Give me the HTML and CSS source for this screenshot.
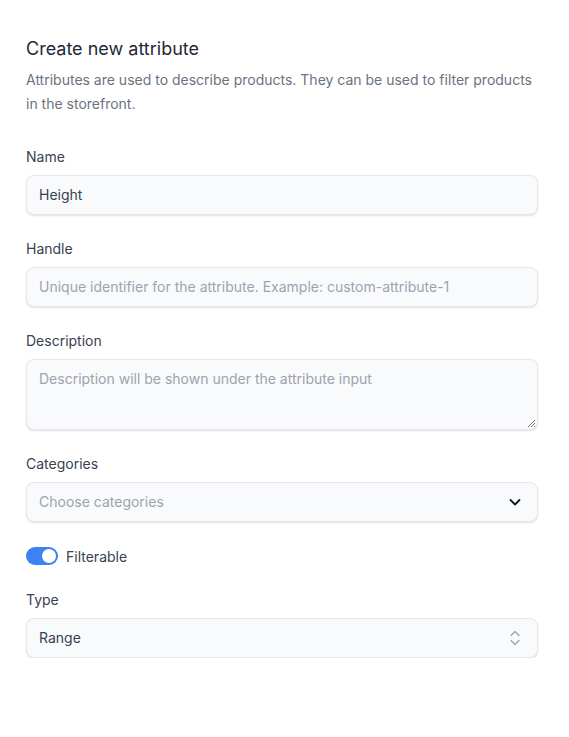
FILE: index.html
```html
<!DOCTYPE html>
<html>
<head>
<meta charset="utf-8">
<link rel="stylesheet" href="styles.css">
</head>
<body>
<div class="page">
  <h1 class="title">Create new attribute</h1>
  <p class="intro">Attributes are used to describe products. They can be used to filter products in the storefront.</p>

  <div class="field first">
    <label class="label">Name</label>
    <div class="input">Height</div>
  </div>

  <div class="field">
    <label class="label">Handle</label>
    <div class="input placeholder">Unique identifier for the attribute. Example: custom-attribute-1</div>
  </div>

  <div class="field">
    <label class="label">Description</label>
    <div class="input textarea placeholder">Description will be shown under the attribute input
      <svg class="grip" width="10" height="10" viewBox="0 0 10 10"><path d="M9 2 L2 9 M9 5 L5 9 M9 8 L8 9" stroke="#6b7280" stroke-width="1" fill="none"/></svg>
    </div>
  </div>

  <div class="field">
    <label class="label">Categories</label>
    <div class="input select placeholder">
      <span>Choose categories</span>
      <svg width="14" height="14" viewBox="0 0 14 14"><path d="M2.5 5 L7 9.5 L11.5 5" stroke="#111827" stroke-width="1.8" fill="none" stroke-linecap="round" stroke-linejoin="round"/></svg>
    </div>
  </div>

  <div class="toggle-row">
    <span class="toggle"><span class="knob"></span></span>
    <span class="toggle-label">Filterable</span>
  </div>

  <div class="field type-field">
    <label class="label">Type</label>
    <div class="input select">
      <span>Range</span>
      <svg width="14" height="18" viewBox="0 0 14 18"><path d="M3 6.5 L7 2.5 L11 6.5 M3 11.5 L7 15.5 L11 11.5" stroke="#9ca3af" stroke-width="1.3" fill="none" stroke-linecap="round" stroke-linejoin="round"/></svg>
    </div>
  </div>
</div>
</body>
</html>
```
FILE: styles.css
```css
* { box-sizing: border-box; }
html, body { margin: 0; padding: 0; background: #ffffff; }
body {
  font-family: Inter, "Noto Sans", sans-serif;
  color: #111827;
}
.page {
  padding: 37px 31px 0 26px;
  max-width: 569px;
}
.title {
  margin: 0;
  font-size: 18px;
  font-weight: 400;
  line-height: 24px;
  color: #1f2937;
}
.intro {
  margin: 7px 0 0 0;
  font-size: 14px;
  line-height: 24px;
  color: #6b7280;
}
.field { margin-top: 24px; }
.field.first { margin-top: 31px; }
.field.type-field { margin-top: 25px; }
.label {
  display: block;
  font-size: 14px;
  line-height: 20px;
  color: #374151;
  margin-bottom: 8px;
}
.input {
  position: relative;
  height: 40px;
  border: 1px solid #e5e7eb;
  border-radius: 8px;
  background: #f9fafb;
  box-shadow: 0 1px 2px rgba(0,0,0,0.12);
  padding: 0 12px;
  font-size: 14px;
  line-height: 38px;
  color: #374151;
  white-space: nowrap;
  overflow: hidden;
}
.placeholder { color: #9ca3af; }
.textarea {
  height: 71px;
  line-height: 20px;
  padding-top: 9px;
}
.grip { position: absolute; right: 1px; bottom: 1px; }
.select {
  display: flex;
  align-items: center;
  justify-content: space-between;
  padding-right: 15px;
}
.toggle-row {
  margin-top: 25px;
  display: flex;
  align-items: center;
  height: 18px;
}
.toggle {
  position: relative;
  width: 32px;
  height: 18px;
  border-radius: 9px;
  background: #3b82f6;
  display: inline-block;
}
.knob {
  position: absolute;
  right: 2px;
  top: 2px;
  width: 14px;
  height: 14px;
  border-radius: 50%;
  background: #ffffff;
}
.toggle-label {
  margin-left: 8px;
  font-size: 14px;
  color: #374151;
}
```
